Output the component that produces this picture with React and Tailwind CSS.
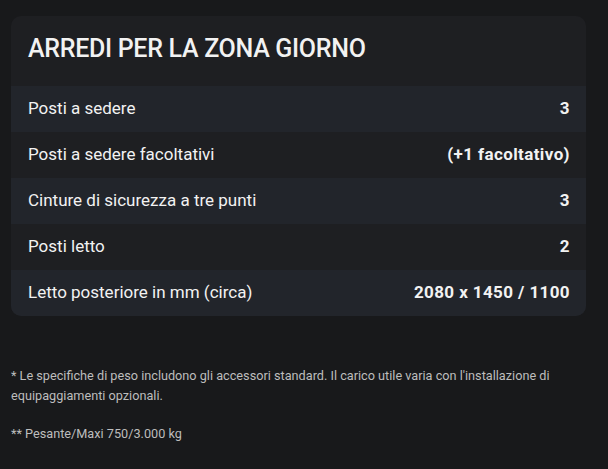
export default function App() {
  const rows = [
    ["Posti a sedere", "3"],
    ["Posti a sedere facoltativi", "(+1 facoltativo)"],
    ["Cinture di sicurezza a tre punti", "3"],
    ["Posti letto", "2"],
    ["Letto posteriore in mm (circa)", "2080 x 1450 / 1100"],
  ];
  return (
    <div className="min-h-[469px] w-[608px] bg-[#18191b] pt-[16px] pl-[11px] pr-[22px] font-['Roboto',sans-serif] text-[#f2f2f2]">
      <div className="overflow-hidden rounded-[10px] bg-[#1e1f22]">
        <h2 className="px-[17px] pt-[19px] pb-[24px] text-[25px] font-medium leading-[27px] tracking-[-0.3px]">
          ARREDI PER LA ZONA GIORNO
        </h2>
        <div>
          {rows.map(([l, v], i) => (
            <div
              key={i}
              className={`flex h-[46px] items-center justify-between px-[16px] text-[17px] ${i % 2 === 0 ? "bg-[#22252b]" : "bg-[#1e1f22]"}`}
            >
              <span className="pl-[1px]">{l}</span>
              <span className="font-bold tracking-[0.4px]">{v}</span>
            </div>
          ))}
        </div>
      </div>
      <div className="pt-[50px] text-[12.7px] leading-[20px] text-[#bdbdbd]">
        <p>
          * Le specifiche di peso includono gli accessori standard. Il carico utile varia con l'installazione di
          <br />
          equipaggiamenti opzionali.
        </p>
        <p className="mt-[18px]">** Pesante/Maxi 750/3.000 kg</p>
      </div>
    </div>
  );
}
